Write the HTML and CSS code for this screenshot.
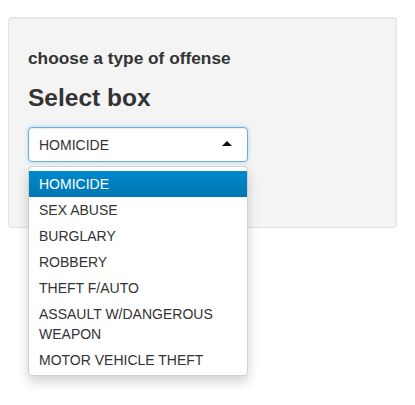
FILE: index.html
```html
<!DOCTYPE html>
<html>
<head>
<meta charset="utf-8">
<link rel="stylesheet" href="styles.css">
</head>
<body>
<div class="well">
  <label class="control-label">choose a type of offense</label>
  <h3 class="title">Select box</h3>
  <div class="form-group">
    <div class="selectize">
      <div class="sel-input">
        <span class="sel-item">HOMICIDE</span>
        <span class="caret"></span>
      </div>
      <div class="dropdown">
        <div class="option active">HOMICIDE</div>
        <div class="option">SEX ABUSE</div>
        <div class="option">BURGLARY</div>
        <div class="option">ROBBERY</div>
        <div class="option">THEFT F/AUTO</div>
        <div class="option">ASSAULT W/DANGEROUS WEAPON</div>
        <div class="option">MOTOR VEHICLE THEFT</div>
      </div>
    </div>
  </div>
</div>
</body>
</html>
```
FILE: styles.css
```css
html {
  margin: 0;
  padding: 0;
  background: #fff;
  min-height: 100%;
}
body {
  margin: 0;
  min-height: 405px;
  box-sizing: border-box;
  font-family: "Liberation Sans", Arial, sans-serif;
  font-size: 14px;
  line-height: 20px;
  color: #333;
  padding: 17px 18px 0 8px;
}
.well {
  background: #f4f4f4;
  border: 1px solid #e3e3e3;
  border-radius: 4px;
  box-shadow: inset 0 1px 1px rgba(0,0,0,0.05);
  padding: 19px;
  height: 211px;
  box-sizing: border-box;
}
.control-label {
  display: block;
  margin-top: 11px;
  font-weight: bold;
  font-size: 17.3px;
  line-height: 20px;
}
.title {
  margin: 17px 0 0;
  font-size: 24.5px;
  line-height: 26px;
  font-weight: bold;
}
.form-group {
  margin-top: 16px;
  width: 220px;
}
.selectize {
  position: relative;
}
.sel-input {
  height: 35px;
  box-sizing: border-box;
  border: 1px solid #66afe9;
  border-radius: 4px;
  background: #fff;
  box-shadow: inset 0 1px 1px rgba(0,0,0,0.075), 0 0 4px rgba(102,175,233,0.5);
  display: flex;
  align-items: center;
  justify-content: space-between;
  padding: 0 15px 0 10px;
}
.sel-item {
  font-size: 14px;
  color: #333;
}
.caret {
  width: 0;
  height: 0;
  border-left: 5px solid transparent;
  border-right: 5px solid transparent;
  border-bottom: 5px solid #111;
  margin-top: -3px;
}
.dropdown {
  position: absolute;
  left: 0;
  right: 0;
  top: 39px;
  background: #fff;
  border: 1px solid #d0d0d0;
  border-radius: 4px;
  box-shadow: 0 6px 12px rgba(0,0,0,0.175);
  padding: 4px 0 2px;
  z-index: 10;
}
.option {
  padding: 3px 12px 3px 10px;
  line-height: 20px;
  font-size: 14px;
  color: #333;
}
.option.active {
  color: #fff;
  background: linear-gradient(to bottom, #0088cc, #0077b3);
}
```
